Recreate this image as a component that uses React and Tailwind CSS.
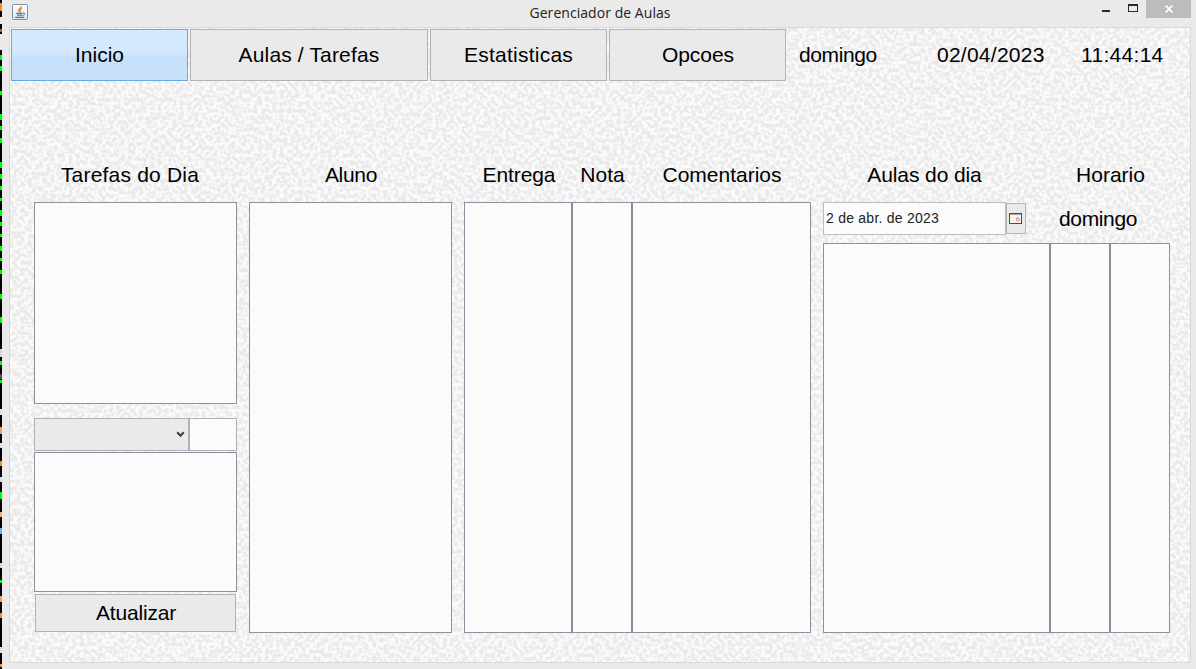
import React from "react";

const SPECKS = [
  [3, 8, "#f08a24"], [17, 7, "#e8e8e8"], [29, 3, "#b06030"], [34, 16, "#e8e8e8"],
  [55, 5, "#00ff00"], [66, 5, "#00ff00"], [91, 4, "#00ff00"], [114, 6, "#00ff00"],
  [126, 4, "#00ff00"], [138, 5, "#00ff00"], [162, 6, "#00ff00"], [174, 5, "#00ff00"],
  [186, 4, "#00ff00"], [198, 3, "#00ff00"], [210, 6, "#00ff00"], [222, 4, "#00ff00"],
  [234, 3, "#00ff00"], [246, 5, "#00ff00"], [258, 3, "#00ff00"], [270, 4, "#00ff00"],
  [294, 5, "#00ff00"], [317, 6, "#00ff00"], [349, 8, "#d8d8d8"], [361, 4, "#00ff00"],
  [374, 5, "#505050"], [380, 3, "#00ff00"], [409, 6, "#e0e0e0"], [427, 7, "#f0a060"],
  [443, 5, "#e0e0e0"], [461, 5, "#f08a24"], [477, 5, "#e0e0e0"], [492, 7, "#00ff00"],
  [512, 5, "#f0b080"], [528, 6, "#70b0e8"], [563, 5, "#d8d8d8"], [580, 3, "#00ff00"],
  [596, 6, "#f0a060"], [613, 5, "#f08a24"], [647, 6, "#e0e0e0"], [664, 3, "#f08a24"],
];

function ConsoleEdge() {
  return (
    <svg className="h-[669px] w-[2px] shrink-0 bg-black" viewBox="0 0 2 669" shapeRendering="crispEdges">
      {SPECKS.map(([y, h, fill]) => (
        <rect key={y} x="0" y={y} width="2" height={h} fill={fill} />
      ))}
    </svg>
  );
}

function JavaIcon() {
  return (
    <svg className="h-4 w-4" viewBox="0 0 16 16" fill="none">
      <defs>
        <linearGradient id="tile" x1="0" y1="0" x2="0" y2="1">
          <stop offset="0" stopColor="#ffffff" />
          <stop offset="1" stopColor="#dce5ec" />
        </linearGradient>
      </defs>
      <rect x="0.5" y="0.5" width="15" height="15" rx="1.2" fill="url(#tile)" stroke="#7890a6" />
      <path d="M9.2 2.3c.4 1.8-2.9 2.4-2.6 4.1.1.7.8 1.1 1 1.8M9.8 4.6c-1.4.5-2 1-1.6 1.8.3.6.3 1-.2 1.6" stroke="#e58a2e" strokeWidth="1.4" />
      <path d="M4.3 9.4h6.3M5 11.2h5.4M3.2 13.4h9" stroke="#52779a" strokeWidth="1.2" />
      <path d="M10.8 9c2.8-.6 2.5 2-.2 2.5" stroke="#52779a" strokeWidth="1" />
    </svg>
  );
}

function TitleBar() {
  return (
    <header className="flex h-[27px] items-start pl-[10px]">
      <div className="flex w-[90px] pt-1">
        <JavaIcon />
      </div>
      <h1 className="flex-1 whitespace-nowrap pr-[3px] pt-[3px] text-center font-['Open_Sans','Noto_Sans',sans-serif] text-[14px] leading-5 tracking-[0.05px] text-[#222]">
        Gerenciador de Aulas
      </h1>
      <div className="flex">
        <svg className="h-[18px] w-[45px]" viewBox="0 0 45 18" shapeRendering="crispEdges">
          <rect x="1" y="10" width="8" height="2" fill="#2b2b2b" />
          <path d="M27 4h10v8H27zM28 6v5h8V6z" fill="#2b2b2b" fillRule="evenodd" />
        </svg>
        <div className="flex h-[18px] w-[45px] items-center justify-center bg-[#bcbcbc]">
          <svg className="h-2 w-2" viewBox="0 0 8 8" stroke="#fff" strokeWidth="1.7">
            <path d="M.7.7l6.6 6.6M7.3.7L.7 7.3" />
          </svg>
        </div>
        <div className="w-[5px]" />
      </div>
    </header>
  );
}

function Texture() {
  return (
    <svg className="absolute inset-0 h-full w-full" aria-hidden="true">
      <filter id="grain" x="0" y="0" width="100%" height="100%" colorInterpolationFilters="sRGB">
        <feTurbulence type="fractalNoise" baseFrequency="0.27" numOctaves="1" seed="7" />
        <feColorMatrix values="6 0 0 0 -2.5  6 0 0 0 -2.5  6 0 0 0 -2.5  0 0 0 0 1" />
        <feComponentTransfer>
          <feFuncR type="table" tableValues="0.918 0.984" />
          <feFuncG type="table" tableValues="0.918 0.984" />
          <feFuncB type="table" tableValues="0.918 0.984" />
        </feComponentTransfer>
      </filter>
      <rect width="100%" height="100%" filter="url(#grain)" />
    </svg>
  );
}

function NavButton({ className, children }) {
  return (
    <button className={"flex h-[52px] items-center justify-center border " + className}>{children}</button>
  );
}

const idle = "border-[#b2b2b2] bg-[#eaeaea]";
const PANE = "border border-[#8a919f] bg-[#fbfbfb]";

function Toolbar() {
  return (
    <nav className="flex h-[53px] items-start gap-[2px] pl-px pt-px">
      <NavButton className="w-[177px] border-[#69a9e6] bg-linear-to-b from-[#d5e9fe] from-45% to-[#c8e1fb] to-55%">Inicio</NavButton>
      <NavButton className={idle + " w-[238px] tracking-[0.15px]"}>Aulas / Tarefas</NavButton>
      <NavButton className={idle + " w-[177px] tracking-[0.25px]"}>Estatisticas</NavButton>
      <NavButton className={idle + " w-[177px] pl-px tracking-[-0.05px]"}>Opcoes</NavButton>
      <div className="flex h-[52px] items-center whitespace-nowrap pl-[11px]">
        <span className="w-[138px] tracking-[-0.4px]">domingo</span>
        <span className="w-[144px] tracking-[0.25px]">02/04/2023</span>
        <span className="tracking-[0.3px]">11:44:14</span>
      </div>
    </nav>
  );
}

function Heading({ className, children }) {
  return <h2 className={"flex h-[29px] items-center justify-center whitespace-nowrap pt-px " + className}>{children}</h2>;
}

function TasksColumn() {
  return (
    <section className="flex w-[203px] flex-col">
      <Heading className="mb-[13px] pr-[11px] tracking-[0.2px]">Tarefas do Dia</Heading>
      <div className={PANE + " h-[202px]"} />
      <div className="mt-[14px] flex h-[33px]">
        <div className="flex w-[156px] items-center justify-end border border-r-2 border-[#b0b2b7] bg-[#eaeaea] pr-[3px]">
          <svg className="h-[7px] w-[9px]" viewBox="0 0 9 7" fill="none" stroke="#404040" strokeWidth="2">
            <path d="M1.2 1.3l3.3 3.4 3.3-3.4" />
          </svg>
        </div>
        <div className="flex-1 border border-l-0 border-[#b0b2b7] bg-[#fbfbfb]" />
      </div>
      <div className={PANE + " mt-px h-[140px]"} />
      <button className="mx-px mt-[2px] flex h-[38px] items-center justify-center border border-[#b2b2b2] bg-[#eaeaea] pl-px tracking-[-0.2px]">Atualizar</button>
    </section>
  );
}

function StudentColumn() {
  return (
    <section className="flex w-[203px] flex-col">
      <Heading className="mb-[13px] pl-px tracking-[-0.3px]">Aluno</Heading>
      <div className={PANE + " h-[431px]"} />
    </section>
  );
}

function GradesColumn() {
  return (
    <section className="flex w-[347px] flex-col">
      <div className="mb-[13px] flex pl-px">
        <Heading className="w-[108px] tracking-[-0.1px]">Entrega</Heading>
        <Heading className="w-[59px]">Nota</Heading>
        <Heading className="w-[179px] pl-px">Comentarios</Heading>
      </div>
      <div className={PANE + " flex h-[431px]"}>
        <div className="w-[108px] border-r-2 border-[#8a8e9a]" />
        <div className="w-[60px] border-r-2 border-[#8a8e9a]" />
      </div>
    </section>
  );
}

function CalendarIcon() {
  return (
    <svg className="h-[11px] w-[13px]" viewBox="0 0 13 11" fill="none">
      <rect x="0.5" y="0.5" width="12" height="10" fill="#f6f3f2" stroke="#4a4a50" />
      <path d="M1 1.5h4" stroke="#d8a468" strokeWidth="1" />
      <path d="M5 1.5h7" stroke="#93a9d0" strokeWidth="1" />
      <circle cx="8.8" cy="6.3" r="1.5" stroke="#e89a8c" strokeWidth="1.2" />
    </svg>
  );
}

function ClassesColumn() {
  return (
    <section className="flex w-[347px] flex-col">
      <div className="mb-[13px] flex">
        <Heading className="w-[203px] shrink-0 tracking-[-0.1px]">Aulas do dia</Heading>
        <Heading className="w-[169px] shrink-0">Horario</Heading>
      </div>
      <div className="flex h-[33px] items-start">
        <div className="flex h-[33px] w-[183px] items-center border border-[#babdc2] bg-[#fbfbfb] pb-[2px] pl-[2px] text-[14px] tracking-[0.24px] text-[#222]">2 de abr. de 2023</div>
        <div className="mt-px flex h-[31px] w-[20px] items-center justify-center border border-[#b5b5b5] bg-[#eaeaea] pr-px">
          <CalendarIcon />
        </div>
        <div className="flex h-[33px] items-center pl-[33px] pt-px tracking-[-0.35px]">domingo</div>
      </div>
      <div className={PANE + " mt-[8px] flex h-[390px]"}>
        <div className="w-[227px] border-r-2 border-[#8a8e9a]" />
        <div className="w-[60px] border-r-2 border-[#8a8e9a]" />
      </div>
    </section>
  );
}

export default function App() {
  return (
    <div className="flex h-[669px] w-[1196px] overflow-hidden bg-[#eaeaea] font-['Liberation_Sans',Arial,sans-serif] text-[21px] leading-6 text-black">
      <ConsoleEdge />
      <div className="flex flex-1 flex-col">
        <TitleBar />
        <div className="relative ml-[7px] mr-[5px] h-[636px] border border-[#d9d9d9] bg-[#fbfbfb]">
          <Texture />
          <main className="relative">
            <Toolbar />
            <div className="flex gap-[12px] pl-[24px] pt-[79px]">
              <TasksColumn />
              <StudentColumn />
              <GradesColumn />
              <ClassesColumn />
            </div>
          </main>
        </div>
      </div>
    </div>
  );
}
